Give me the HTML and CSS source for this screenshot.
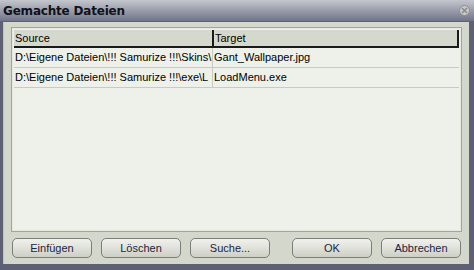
FILE: index.html
```html
<!DOCTYPE html>
<html lang="de">
<head>
    <meta charset="UTF-8">
    <title>Gemachte Dateien</title>
    <link rel="stylesheet" href="styles.css">
</head>
<body>
    <div class="window">
        <div class="titlebar">
            <span class="title">Gemachte Dateien</span>
            <svg class="close" width="11" height="11" viewBox="0 0 11 11">
                <circle cx="5.5" cy="5.5" r="5" fill="#c8cac8" stroke="#8c8e90"/>
                <path d="M3 3 L8 8 M8 3 L3 8" stroke="#8a8c8c" stroke-width="1.6"/>
            </svg>
        </div>
        <div class="client">
            <div class="list">
                <div class="head">
                    <div class="col src">Source</div>
                    <div class="col tgt">Target</div>
                </div>
                <div class="row">
                    <div class="col src">D:\Eigene Dateien\!!! Samurize !!!\Skins\</div>
                    <div class="col tgt">Gant_Wallpaper.jpg</div>
                </div>
                <div class="row">
                    <div class="col src">D:\Eigene Dateien\!!! Samurize !!!\exe\L</div>
                    <div class="col tgt">LoadMenu.exe</div>
                </div>
            </div>
            <div class="buttons">
                <div class="group">
                    <button>Einfügen</button>
                    <button>Löschen</button>
                    <button>Suche...</button>
                </div>
                <div class="group">
                    <button>OK</button>
                    <button>Abbrechen</button>
                </div>
            </div>
        </div>
    </div>
</body>
</html>
```

FILE: styles.css
```css
body{
    margin:0;
    font-family:"DejaVu Sans", sans-serif;
    font-size:11px;
}
.window{
    width:474px;
    height:270px;
    box-sizing:border-box;
    display:flex;
    flex-direction:column;
    background:#d4d7cb;
    border-left:3px solid #5d6173;
    border-right:5px solid #5d6173;
    border-bottom:6px solid #5d6173;
}
.titlebar{
    height:21px;
    flex:none;
    display:flex;
    align-items:center;
    justify-content:space-between;
    margin:0 -5px 0 -3px;
    padding:0 4px 0 3px;
    background:linear-gradient(to bottom, #c4c6ce, #9a9daa 50%, #70748a);
    border-bottom:1px solid #5d6173;
}
.title{
    font-weight:bold;
    font-size:12px;
    color:#10121a;
    letter-spacing:-0.2px;
}
.close{
    margin-top:-1px;
}
.client{
    flex:1;
    display:flex;
    flex-direction:column;
    padding:5px 7px 0 7px;
    border-left:1px solid #c2c4be;
}
.list{
    height:199px;
    border:1px solid #a4a69e;
    outline:1px solid #e6e8e0;
    outline-offset:-2px;
    padding:2px;
    background:#eef0ea;
    overflow:hidden;
}
.head, .row{
    display:flex;
    white-space:nowrap;
}
.head{
    height:18px;
    background:#d5d8cc;
    border-bottom:2px solid #1a1a1a;
    border-right:2px solid #1a1a1a;
    box-sizing:border-box;
}
.head .src{
    border-right:2px solid #1a1a1a;
}
.row{
    height:20px;
    border-bottom:1px solid #c8cac4;
    box-sizing:border-box;
}
.row .col{
    line-height:19px;
}
.row .src{
    border-right:1px solid #c8cac4;
}
.col{
    overflow:hidden;
    line-height:17px;
    padding-left:1px;
    color:#000;
    font-family:"Liberation Sans", sans-serif;
    font-size:11px;
}
.src{
    width:197px;
    flex:none;
}
.tgt{
    flex:1;
}
.buttons{
    display:flex;
    justify-content:space-between;
    padding:6px 1px 0 1px;
}
.group{
    display:flex;
    gap:9px;
}
button{
    width:80px;
    height:20px;
    padding:0;
    font-family:"Liberation Sans", sans-serif;
    font-size:11px;
    color:#1c2540;
    border:1px solid #7c7e7a;
    border-radius:5px;
    background:linear-gradient(to bottom, #f0f1ec, #dcded6 60%, #cdd0c6);
}
```
